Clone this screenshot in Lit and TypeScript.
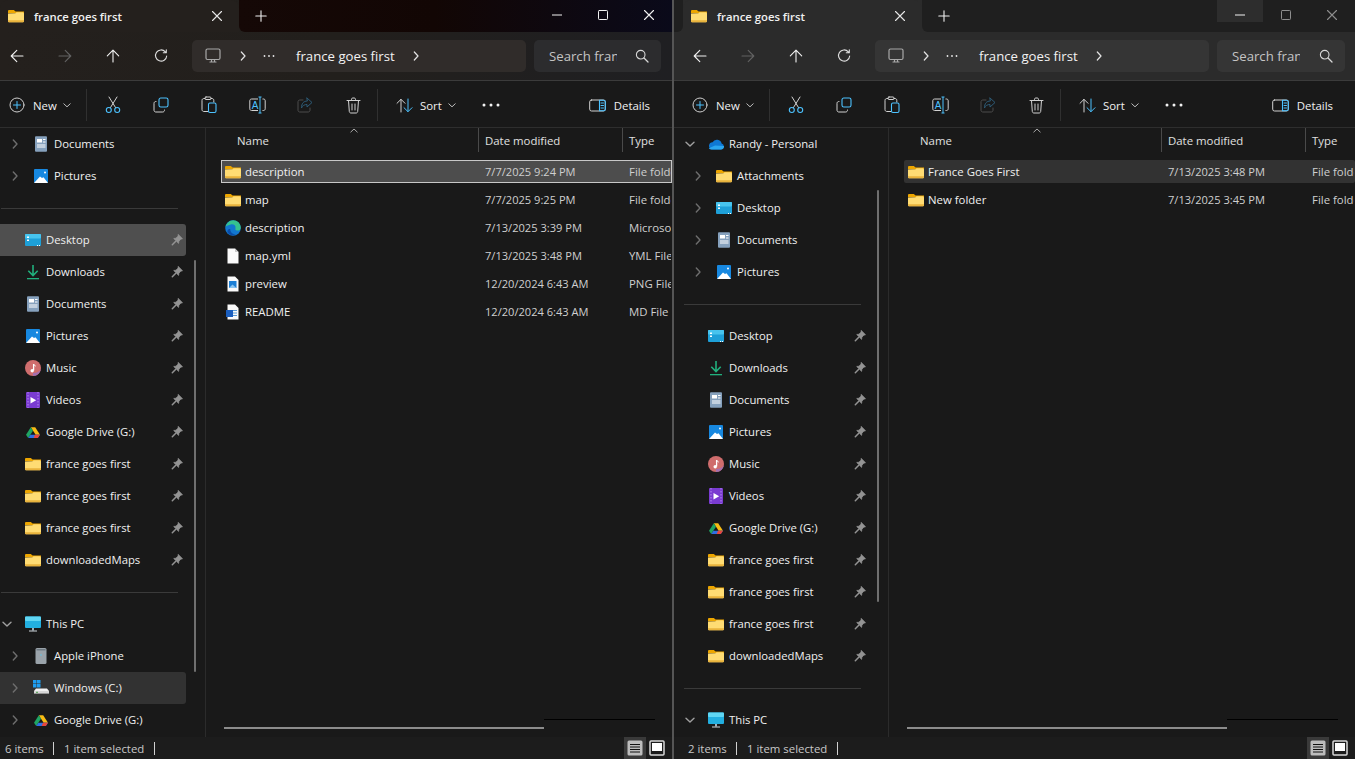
import { LitElement, html, css, svg, nothing } from "lit";

const folder = svg`<path d="M0 3.200C0 2.500.5 2 1.200 2h4.600l1.800 1.600H16v1.600H0z" fill="#eda600"/><path d="M0 5.400 7.400 5.200l1.200-1h6c.8 0 1.400.6 1.400 1.400v7.300c0 .8-.6 1.400-1.400 1.400H1.400C.6 14.300 0 13.700 0 12.900z" fill="#ffdc73"/><path d="M0 12.800c0 .8.6 1.500 1.400 1.500h13.200c.8 0 1.400-.7 1.400-1.500v-.5H0z" fill="#e9b33c"/>`;

const ICONS: Record<string, unknown> = {
  folder,
  desktop: svg`<rect x="0" y="2" width="16" height="12" rx="1" fill="#1ea0d8"/><rect x="0" y="2" width="16" height="4.500" rx="1" fill="#47c4ee"/><rect x="2" y="4.500" width="2" height="1.500" fill="#fff"/><rect x="2" y="7.500" width="2" height="1.500" fill="#fff"/><rect x="12" y="13" width="1" height="1" fill="#fff"/><rect x="14" y="13" width="1" height="1" fill="#fff"/>`,
  downloads: svg`<path d="M8 1v10M3.300 6.800 8 11.500l4.700-4.700" fill="none" stroke="#21b07d" stroke-width="1.600"/><rect x="2" y="14" width="12" height="1.300" fill="#21b07d"/>`,
  documents: svg`<rect x="2" y="0.300" width="12" height="15.500" rx="1" fill="#86a1bd"/><rect x="4" y="3" width="5" height="3.500" fill="#fff"/><rect x="10" y="3" width="2.500" height="1" fill="#fff"/><rect x="10" y="5.500" width="2.500" height="1" fill="#fff"/><rect x="4" y="8.500" width="8.500" height="1" fill="#fff"/><rect x="4" y="10.500" width="8.500" height="1" fill="#fff"/>`,
  pictures: svg`<rect x="1" y="1" width="14" height="14" rx="1" fill="#1788e0"/><path d="M1 15 7 8.500l2 1.600 1.500-.8L15 15z" fill="#fff"/><circle cx="12" cy="4.500" r="1" fill="#fff"/>`,
  music: svg`<circle cx="8" cy="8" r="8" fill="#cf6d6d"/><path d="M8 13a7.500 5 0 0 0 8-4.500c-.5 4-3.500 7.500-8 7.500z" fill="#a36fb0"/><path d="M8.600 4v6.500" stroke="#fff" stroke-width="1.300"/><circle cx="7.200" cy="10.700" r="1.700" fill="#fff"/><path d="M8.600 4c.2 1.300 1.500 1.500 2.200 2.200" stroke="#fff" fill="none"/>`,
  videos: svg`<rect x="1" y="0" width="14" height="16" rx="1" fill="#7a3bd1"/><path d="M3 0v16M13 0v16" stroke="#b68bf0" stroke-dasharray="1.500 1.500"/><path d="M5.500 5v6.500l5.700-3.200z" fill="#fff"/>`,
  drive: svg`<g transform="translate(1 2) scale(.875 .8)"><path d="M5.500 1.500h5L16 11h-5z" fill="#f8bc14"/><path d="M5.500 1.500 0 11l2.500 4L8 6z" fill="#1fa463"/><path d="M2.500 15h11l2.500-4H5z" fill="#2f6fe4"/><path d="M10.300 11 16 11l-2.500 4H8.700z" fill="#e8453c"/></g>`,
  pc: svg`<rect x="0" y="0.500" width="16" height="11.500" rx="1" fill="#22afe0"/><rect x="0" y="0.500" width="16" height="4.500" rx="1" fill="#5fd6f3"/><rect x="7" y="12" width="2" height="2.500" fill="#9fb0bb"/><rect x="4" y="14.500" width="8" height="1" fill="#cdd6dc"/>`,
  iphone: svg`<rect x="2.500" y="0" width="11" height="16" rx="1.500" fill="#9aa3aa"/><rect x="3.500" y="1" width="9" height="1.500" fill="#6e7a82"/><circle cx="8" cy="7" r=".8" fill="#5fc7e8"/>`,
  windows: svg`<rect x="0" y="0" width="3.500" height="3.500" fill="#1e9df0"/><rect x="4" y="0" width="3.500" height="3.500" fill="#1e9df0"/><rect x="0" y="4" width="3.500" height="3.500" fill="#1e9df0"/><rect x="4" y="4" width="3.500" height="3.500" fill="#1e9df0"/><path d="M1 11h15v2.600H1z" fill="#d7d7d7"/><path d="M3 8.500h11l2 2.500H1z" fill="#f2f2f2"/><rect x="3" y="11.800" width="2" height="1" fill="#4aa04a"/>`,
  cloud: svg`<path d="M3.500 13.500h9.500a3 3 0 0 0 .6-5.900 4.800 4.800 0 0 0-9-1.300A3.700 3.700 0 0 0 3.500 13.500z" fill="#0f78d4"/><path d="M3.500 13.500H13a3 3 0 0 0 3-3.500L7 9.500.8 12.200c.7.800 1.700 1.300 2.700 1.300z" fill="#2aa6f0"/>`,
  edge: svg`<circle cx="8" cy="8" r="7.800" fill="#1277cf"/><path d="M.5 7C1.500 3 4.600.2 8.200.2c3.900 0 7.600 3 7.600 7.500 0 2-1.500 2.900-3 2.900-1.700 0-3-.8-2.300-2.400C11 5.700 8.500 3.800 5.800 4.500 3.400 5 1.500 5.500.5 7z" fill="#35c28e"/><path d="M5.200 9c0 3 2.300 5.500 5.800 5.500-1.500 1.200-6 1.300-8-1.500C1.500 11 3 8.500 5.200 9z" fill="#0a4da8"/>`,
  file: svg`<path d="M2.500 0.500h7.500l3.500 3.500v11.500h-11z" fill="#fafafa"/><path d="M10 .5V4h3.500z" fill="#c9c9c9"/>`,
  image: svg`<path d="M2.500 0.500h7.500l3.500 3.500v11.500h-11z" fill="#fafafa"/><rect x="4" y="5" width="7.500" height="7" fill="#1c7fd6"/><path d="M4 12l3.500-3.500 4 3.500z" fill="#8cc6f2"/>`,
  word: svg`<path d="M2.500 0.500h7.500l3.500 3.500v11.500h-11z" fill="#fafafa"/><rect x="1" y="6" width="7" height="7" fill="#1b5ebe"/><rect x="8" y="6" width="4" height="1" fill="#5b9bd8"/><rect x="8" y="8.500" width="4" height="1" fill="#5b9bd8"/><rect x="8" y="11" width="4" height="1" fill="#5b9bd8"/>`,
};

const ic = (name: string) => html`<svg class="ic" viewBox="0 0 16 16" width="16" height="16">${ICONS[name]}</svg>`;

const glyph = (w: number, h: number, body: unknown, cls = "") =>
  html`<svg class=${cls} viewBox="0 0 ${w} ${h}" width=${w} height=${h} fill="none" stroke-linecap="round" stroke-linejoin="round">${body}</svg>`;

const GRAY = "#d2d2d2";
const BLUE = "#4cc2ff";

const chevronR = (c = "#e4e4e4", sw = 1.2) => glyph(6, 10, svg`<path d="M1.300 1 5 5 1.300 9" stroke=${c} stroke-width=${sw}/>`);
const chevronD = (c = "#c8c8c8") => glyph(10, 6, svg`<path d="M1 1.200 5 5 9 1.200" stroke=${c} stroke-width="1.400"/>`);
const tinyChevron = glyph(8, 5, svg`<path d="M.8.800 4 3.800 7.200.800" stroke="#bdbdbd" stroke-width="1"/>`);
const pin = glyph(12, 12, svg`<path d="M7.400.6 11.500 4.700l-1.700.5L7.900 7.200l-.3 2.200L2.700 4.500l2.200-.3L6.900 2.300z" fill="#939393" stroke="#939393" stroke-width=".7"/><path d="M4.500 7.500 1.300 10.700" stroke="#939393" stroke-width="1.500"/>`);

const NAV = {
  back: glyph(14, 14, svg`<path d="M13 7H1.300M6.800 1.300 1.200 7l5.600 5.700" stroke="#f2f2f2" stroke-width="1.100"/>`),
  fwd: glyph(14, 14, svg`<path d="M1 7h11.700M7.200 1.300 12.800 7l-5.600 5.700" stroke="#626262" stroke-width="1.100"/>`),
  up: glyph(14, 14, svg`<path d="M7 13V1.300M1.300 6.800 7 1.200l5.700 5.600" stroke="#f2f2f2" stroke-width="1.100"/>`),
  refresh: glyph(14, 14, svg`<path d="M11.300 2.800A5.600 5.600 0 1 0 12.700 7M12.300.8v3h-3" stroke="#dedede" stroke-width="1.100"/>`),
  monitor: glyph(16, 16, svg`<rect x="1" y="1" width="14" height="10.500" rx="1.500" stroke="#a8a8a8" stroke-width="1.200"/><path d="M5 14h6M6.500 12v2M9.500 12v2" stroke="#a8a8a8" stroke-width="1.200"/>`),
  dots: glyph(12, 4, svg`<circle cx="1.500" cy="2" r=".9" fill="#e8e8e8"/><circle cx="6" cy="2" r=".9" fill="#e8e8e8"/><circle cx="10.500" cy="2" r=".9" fill="#e8e8e8"/>`),
  search: glyph(14, 14, svg`<circle cx="5.700" cy="5.700" r="4.300" stroke="#d8d8d8" stroke-width="1.100"/><path d="M9 9l4 4" stroke="#d8d8d8" stroke-width="1.300"/>`),
  close: glyph(12, 12, svg`<path d="M1.500 1.500l9 9M10.500 1.500l-9 9" stroke="currentColor" stroke-width="1.100"/>`),
  plus: glyph(12, 12, svg`<path d="M6 .8v10.400M.8 6h10.400" stroke="#f0f0f0" stroke-width="1.100"/>`),
  min: glyph(12, 12, svg`<path d="M1 6h10" stroke="currentColor" stroke-width="1" stroke-linecap="butt"/>`),
  max: glyph(12, 12, svg`<rect x="1.500" y="1.500" width="9" height="9" rx=".8" stroke="currentColor" stroke-width="1"/>`),
};

const CMD = {
  plus: glyph(16, 16, svg`<circle cx="8" cy="8" r="7" stroke="#cfcfcf" stroke-width="1"/><path d="M8 4.500v7M4.500 8h7" stroke=${BLUE} stroke-width="1"/>`),
  cut: glyph(16, 18, svg`<path d="M4 1l6.500 10.500M12 1 5.500 11.500" stroke=${GRAY} stroke-width="1"/><circle cx="3.800" cy="14" r="2.500" stroke=${BLUE} stroke-width="1.100"/><circle cx="12.200" cy="14" r="2.500" stroke=${BLUE} stroke-width="1.100"/>`),
  copy: glyph(16, 16, svg`<path d="M3 4.500h-.2C1.800 4.500 1 5.300 1 6.300v6.900c0 1 .8 1.800 1.800 1.800h6.900c1 0 1.800-.8 1.800-1.800V13" stroke=${GRAY} stroke-width="1"/><rect x="6" y="1" width="9" height="9" rx="1.800" stroke=${BLUE} stroke-width="1.100"/>`),
  paste: glyph(16, 18, svg`<path d="M7 15.500H2.800c-1 0-1.800-.8-1.800-1.800V4.300c0-1 .8-1.800 1.800-1.800H4M10 2.500h1c1 0 1.800.8 1.800 1.800V6" stroke=${GRAY} stroke-width="1"/><rect x="4" y="1" width="6" height="2.500" rx="1" stroke=${GRAY} stroke-width="1"/><rect x="7.500" y="7" width="7.500" height="9.500" rx="1.400" stroke=${BLUE} stroke-width="1.100"/>`),
  rename: html`<svg class="txt-ic" viewBox="0 0 17 18" width="17" height="18" fill="none"><path d="M9 3H2.500C1.500 3 .8 3.700.8 4.700v8.100c0 1 .7 1.700 1.700 1.700H9M13.500 3h1c1 0 1.700.7 1.700 1.700v8.100c0 1-.7 1.700-1.700 1.700h-1" stroke=${GRAY} stroke-width="1"/><path d="M9.500 1h3M9.500 17h3M11 1v16" stroke=${BLUE} stroke-width="1"/><text x="2.700" y="12.700" font-size="10" fill=${BLUE} font-family="Liberation Sans, sans-serif">A</text></svg>`,
  share: glyph(16, 16, svg`<path d="M6 3H2.800C1.800 3 1 3.800 1 4.800v8.400c0 1 .8 1.800 1.800 1.800h8.400c1 0 1.800-.8 1.800-1.800V11" stroke="#4d4d4d" stroke-width="1"/><path d="M10 1l5 4.500-5 4.500V7.500C7.500 7.500 5.500 8.500 4.500 11c0-4.500 2-7 5.500-7z" stroke="#2d5a75" stroke-width="1"/>`),
  del: glyph(15, 17, svg`<path d="M1 3.500h13M5.500 3.500V2.300c0-.7.5-1.300 1.200-1.300h1.600c.7 0 1.200.6 1.200 1.300v1.200M2.500 3.500l.8 11c.1.900.8 1.500 1.600 1.500h5.200c.8 0 1.500-.6 1.600-1.500l.8-11M6 7v6M9 7v6" stroke=${GRAY} stroke-width="1"/>`),
  sort: glyph(17, 15, svg`<path d="M5 14V1.500M1 5.300 5 1.300l4 4" stroke=${GRAY} stroke-width="1"/><path d="M12 1v12.500M8 9.700l4 4 4-4" stroke=${BLUE} stroke-width="1"/>`),
  more: glyph(18, 4, svg`<circle cx="2" cy="2" r="1.500" fill="#f2f2f2"/><circle cx="9" cy="2" r="1.500" fill="#f2f2f2"/><circle cx="16" cy="2" r="1.500" fill="#f2f2f2"/>`),
  details: glyph(17, 13, svg`<rect x=".7" y="1" width="15.600" height="11" rx="1.800" stroke=${GRAY} stroke-width="1"/><path d="M10.500 1.200h4c1 0 1.800.8 1.800 1.800v7c0 1-.8 1.800-1.800 1.800h-4z" stroke=${BLUE} stroke-width="1.100"/><path d="M12 4h2.500M12 6.500h2.500M12 9h2.500" stroke=${BLUE} stroke-width="1"/>`),
};

type Side = { sep?: boolean; level?: number; chev?: "r" | "d"; icon?: string; label?: string; pin?: boolean; state?: string };

const quick = (state?: string): Side[] => [
  { level: 0, icon: "desktop", label: "Desktop", pin: true, state },
  { level: 0, icon: "downloads", label: "Downloads", pin: true },
  { level: 0, icon: "documents", label: "Documents", pin: true },
  { level: 0, icon: "pictures", label: "Pictures", pin: true },
  { level: 0, icon: "music", label: "Music", pin: true },
  { level: 0, icon: "videos", label: "Videos", pin: true },
  { level: 0, icon: "drive", label: "Google Drive (G:)", pin: true },
  { level: 0, icon: "folder", label: "france goes first", pin: true },
  { level: 0, icon: "folder", label: "france goes first", pin: true },
  { level: 0, icon: "folder", label: "france goes first", pin: true },
  { level: 0, icon: "folder", label: "downloadedMaps", pin: true },
];

const LEFT_SIDE: Side[] = [
  { level: 1, chev: "r", icon: "documents", label: "Documents" },
  { level: 1, chev: "r", icon: "pictures", label: "Pictures" },
  { sep: true },
  ...quick("selected"),
  { sep: true },
  { level: 0, chev: "d", icon: "pc", label: "This PC" },
  { level: 1, chev: "r", icon: "iphone", label: "Apple iPhone" },
  { level: 1, chev: "r", icon: "windows", label: "Windows (C:)", state: "current" },
  { level: 1, chev: "r", icon: "drive", label: "Google Drive (G:)" },
];

const RIGHT_SIDE: Side[] = [
  { level: 0, chev: "d", icon: "cloud", label: "Randy - Personal" },
  { level: 1, chev: "r", icon: "folder", label: "Attachments" },
  { level: 1, chev: "r", icon: "desktop", label: "Desktop" },
  { level: 1, chev: "r", icon: "documents", label: "Documents" },
  { level: 1, chev: "r", icon: "pictures", label: "Pictures" },
  { sep: true },
  ...quick(),
  { sep: true },
  { level: 0, chev: "d", icon: "pc", label: "This PC" },
];

type FileRow = { icon: string; name: string; date: string; type: string; state?: string };

const LEFT_FILES: FileRow[] = [
  { icon: "folder", name: "description", date: "7/7/2025 9:24 PM", type: "File folder", state: "focused" },
  { icon: "folder", name: "map", date: "7/7/2025 9:25 PM", type: "File folder" },
  { icon: "edge", name: "description", date: "7/13/2025 3:39 PM", type: "Microsoft Edge" },
  { icon: "file", name: "map.yml", date: "7/13/2025 3:48 PM", type: "YML File" },
  { icon: "image", name: "preview", date: "12/20/2024 6:43 AM", type: "PNG File" },
  { icon: "word", name: "README", date: "12/20/2024 6:43 AM", type: "MD File" },
];

const RIGHT_FILES: FileRow[] = [
  { icon: "folder", name: "France Goes First", date: "7/13/2025 3:48 PM", type: "File folder", state: "soft" },
  { icon: "folder", name: "New folder", date: "7/13/2025 3:45 PM", type: "File folder" },
];

class ExplorerPane extends LitElement {
  static properties = {
    side: { attribute: false },
    files: { attribute: false },
    variant: { reflect: true },
    count: {},
    thumbTop: { type: Number },
  };
  declare side: Side[];
  declare files: FileRow[];
  declare variant: string;
  declare count: string;
  declare thumbTop: number;

  static styles = css`
    :host {
      display: flex;
      flex-direction: column;
      height: 759px;
      overflow: hidden;
      position: relative;
      background: #191919;
      color: #f0f0f0;
      font-family: "Open Sans", "Noto Sans", sans-serif;
      font-size: 11.400px;
      --inset: 0px;
      --strip: linear-gradient(90deg, #150806 0%, #120604 45%, #0a0a1a 100%);
      --chrome: linear-gradient(90deg, #24201d 0%, #221f1c 50%, #1f1f22 100%);
      --tab: #24201d;
      --field: #302c2a;
      --field2: #2c2c2e;
      --cap: #f2f2f2;
      --cap2: #f2f2f2;
      --hover: transparent;
    }
    :host([variant="blurred"]) {
      --inset: 9px;
      --strip: #1f1f1f;
      --chrome: #2b2b2b;
      --tab: #2b2b2b;
      --field: #353535;
      --field2: #353535;
      --cap2: #8e8e8e;
      --hover: #2d2d2d;
    }
    svg { display: block; flex: none; }
    .strip { display: flex; height: 32px; background: var(--chrome); flex: none; }
    .strip-gap { width: var(--inset); background: var(--strip); border-bottom-right-radius: 6px; flex: none; }
    .tab { width: 239px; display: flex; align-items: center; padding: 0 16px 0 8px; box-sizing: border-box; background: var(--tab); border-radius: 8px 8px 0 0; flex: none; }
    .tab-title { margin-left: 10px; font-weight: 600; flex: 1; white-space: nowrap; font-size: 11.300px; }
    .tab-x { color: #e8e8e8; }
    .rest { flex: 1; display: flex; align-items: flex-start; background: var(--strip); border-bottom-left-radius: 6px; }
    .plus { padding: 10px 0 0 16px; }
    .caps { margin-left: auto; display: flex; }
    .cap { width: 46px; height: 15px; padding-top: 7px; display: flex; align-items: center; justify-content: center; color: var(--cap2); }
    .cap.min { background: var(--hover); color: var(--cap); }
    .nav { height: 48px; display: flex; align-items: center; background: var(--chrome); padding-left: calc(10px + var(--inset)); padding-right: 11px; border-bottom: 1px solid #3b3b3b; flex: none; }
    :host([variant="blurred"]) .nav { padding-right: 10px; }
    .nav-btns { display: flex; gap: 34px; }
    .crumbs { margin-left: 24px; width: 334px; height: 32px; border-radius: 5px; background: var(--field); display: flex; align-items: center; padding-left: 13px; box-sizing: border-box; font-size: 13.200px; color: #f2f2f2; flex: none; }
    .crumb-chev { margin-left: 19px; }
    .crumb-dots { margin-left: 17px; }
    .crumb-name { margin-left: 21px; white-space: nowrap; }
    .crumb-end { margin-left: 18px; }
    .searchbox { margin-left: 8px; flex: 1; height: 32px; border-radius: 5px; background: var(--field2); display: flex; align-items: center; padding: 0 12px 0 15px; box-sizing: border-box; font-size: 13.200px; color: #c4c4c4; }
    .search-text { width: 68px; overflow: hidden; white-space: nowrap; flex: none; }
    .searchbox svg { margin-left: auto; }
    .cmd { height: 47px; display: flex; align-items: center; background: #191919; padding-left: calc(9px + var(--inset)); padding-top: 2px; box-sizing: border-box; border-bottom: 1px solid #2e2e2e; flex: none; }
    .new { display: flex; align-items: center; width: 77px; flex: none; }
    .new span { margin-left: 8px; margin-right: 6px; }
    .vsep { width: 1px; height: 32px; background: #303030; flex: none; }
    .tools { display: flex; flex: none; margin-left: 2px; }
    .tool { width: 48px; height: 32px; display: flex; align-items: center; justify-content: center; flex: none; }
    .sort { display: flex; align-items: center; margin-left: 18px; flex: none; }
    .sort span { margin-left: 7px; margin-right: 6px; }
    .more { margin-left: 26px; flex: none; }
    .details { display: flex; align-items: center; margin-left: auto; padding-right: 22px; flex: none; }
    .details span { margin-left: 8px; }
    .body { flex: 1; display: flex; min-height: 0; position: relative; padding-left: var(--inset); }
    .tree { width: 205px; flex: none; overflow: hidden; border-right: 1px solid #2b2b2b; }
    .row { height: 32px; width: 186px; display: flex; align-items: center; box-sizing: border-box; border-radius: 0 3px 3px 0; white-space: nowrap; font-size: 11.300px; }
    .row.selected { background: #4f4f4f; }
    .row.current { background: #323232; }
    .chev { width: 14px; display: flex; justify-content: center; flex: none; }
    .row .ic { margin-left: 11px; }
    .row .label { margin-left: 5px; flex: 1; padding-bottom: 2px; }
    .row.l1 { padding-left: 8px; }
    .row .pin { margin-right: 3px; }
    .sep { height: 32px; display: flex; align-items: center; }
    .sep i { display: block; width: 177px; margin-left: 1px; height: 1px; background: #3a3a3a; }
    .thumb { position: absolute; left: calc(194px + var(--inset)); width: 2px; background: #6f6f6f; border-radius: 1px; }
    .list { flex: 1; min-width: 0; overflow: hidden; position: relative; }
    .head { height: 24px; display: flex; font-size: 11.400px; color: #e0e0e0; position: relative; }
    .h-name { width: 273px; padding-left: 31px; box-sizing: border-box; border-right: 1px solid #4a4a4a; display: flex; align-items: center; flex: none; }
    .h-date { width: 144px; padding-left: 6px; box-sizing: border-box; border-right: 1px solid #4a4a4a; display: flex; align-items: center; flex: none; }
    .h-type { padding-left: 6px; display: flex; align-items: center; flex: none; }
    .caret { position: absolute; left: 144px; top: 0; }
    .rows { padding: 8px 0 0 15px; display: flex; flex-direction: column; gap: 5px; }
    .frow { height: 23px; display: flex; align-items: center; box-sizing: border-box; white-space: nowrap; font-size: 11.400px; border: 1px solid transparent; overflow: hidden; }
    .frow.focused { background: #4d4d4d; border-color: #c8c8c8; }
    .frow.soft { background: #323232; border-radius: 2px; }
    .f-name { width: 263px; display: flex; align-items: center; padding-left: 3px; box-sizing: border-box; flex: none; }
    .f-name span { margin-left: 4px; }
    .f-date { width: 144px; color: #cfcfcf; flex: none; font-size: 11.100px; }
    .f-type { color: #cfcfcf; flex: none; }
    .hbar { position: absolute; left: 18px; bottom: 8px; width: 320px; height: 2px; background: #8c8c8c; }
    .hline { position: absolute; left: 338px; bottom: 17px; width: 111px; height: 1px; background: #000; }
    .status { height: 22px; background: #1c1c1c; display: flex; align-items: center; padding-left: calc(5px + var(--inset)); color: #c8c8c8; position: relative; flex: none; font-size: 11.400px; white-space: nowrap; }
    .bar { width: 1px; height: 13px; background: #d0d0d0; flex: none; }
    .status .a { width: 48px; flex: none; }
    .status .b { margin: 0 10px; }
    .views { margin-left: auto; display: flex; height: 22px; align-items: stretch; padding-right: 4px; }
    .view { width: 22px; display: flex; align-items: center; justify-content: center; }
    .view.on { background: #3a3a3a; }
  `;

  private sideRow(r: Side) {
    if (r.sep) return html`<div class="sep"><i></i></div>`;
    const chev = r.chev === "r" ? chevronR("#6e6e6e", 1.4) : r.chev === "d" ? chevronD("#a0a0a0") : nothing;
    return html`<div class="row l${r.level} ${r.state ?? ""}">
      <span class="chev">${chev}</span>${ic(r.icon!)}<span class="label">${r.label}</span>
      ${r.pin ? html`<span class="pin">${pin}</span>` : nothing}
    </div>`;
  }

  render() {
    return html`
      <div class="strip">
        <div class="strip-gap"></div>
        <div class="tab">${ic("folder")}<span class="tab-title">france goes first</span><span class="tab-x">${NAV.close}</span></div>
        <div class="rest">
          <span class="plus">${NAV.plus}</span>
          <div class="caps"><span class="cap min">${NAV.min}</span><span class="cap">${NAV.max}</span><span class="cap">${NAV.close}</span></div>
        </div>
      </div>
      <div class="nav">
        <div class="nav-btns">${NAV.back}${NAV.fwd}${NAV.up}${NAV.refresh}</div>
        <div class="crumbs">${NAV.monitor}<span class="crumb-chev">${chevronR()}</span><span class="crumb-dots">${NAV.dots}</span><span class="crumb-name">france goes first</span><span class="crumb-end">${chevronR()}</span></div>
        <div class="searchbox"><span class="search-text">Search france goes first</span>${NAV.search}</div>
      </div>
      <div class="cmd">
        <div class="new">${CMD.plus}<span>New</span>${tinyChevron}</div>
        <div class="vsep"></div>
        <div class="tools">
          <span class="tool">${CMD.cut}</span><span class="tool">${CMD.copy}</span><span class="tool">${CMD.paste}</span>
          <span class="tool">${CMD.rename}</span><span class="tool">${CMD.share}</span><span class="tool">${CMD.del}</span>
        </div>
        <div class="vsep"></div>
        <div class="sort">${CMD.sort}<span>Sort</span>${tinyChevron}</div>
        <div class="more">${CMD.more}</div>
        <div class="details">${CMD.details}<span>Details</span></div>
      </div>
      <div class="body">
        <div class="tree">${this.side.map((r) => this.sideRow(r))}</div>
        <div class="thumb" style="top:${this.thumbTop}px;height:412px"></div>
        <div class="list">
          <div class="head">
            <div class="h-name">Name</div><div class="h-date">Date modified</div><div class="h-type">Type</div>
            <span class="caret">${glyph(8, 5, svg`<path d="M.8 4 4 1l3.200 3" stroke="#a8a8a8" stroke-width="1"/>`)}</span>
          </div>
          <div class="rows">
            ${this.files.map((f) => html`<div class="frow ${f.state ?? ""}">
              <div class="f-name">${ic(f.icon)}<span>${f.name}</span></div>
              <div class="f-date">${f.date}</div><div class="f-type">${f.type}</div>
            </div>`)}
          </div>
          <div class="hline"></div><div class="hbar"></div>
        </div>
      </div>
      <div class="status">
        <span class="a">${this.count}</span><span class="bar"></span><span class="b">1 item selected</span><span class="bar"></span>
        <div class="views">
          <span class="view on">${glyph(16, 16, svg`<rect x=".5" y=".5" width="15" height="15" rx="1.500" fill="#bdbdbd"/><path d="M3 4.500h10M3 7h10M3 9.500h10M3 12h10" stroke="#111" stroke-width="1" stroke-linecap="butt"/>`)}</span>
          <span class="view">${glyph(16, 16, svg`<rect x="1" y="1" width="14" height="14" rx="1" stroke="#d8d8d8" stroke-width="1.500"/><rect x="3" y="3" width="10" height="8" fill="#fff"/>`)}</span>
        </div>
      </div>
    `;
  }
}
customElements.define("explorer-pane", ExplorerPane);

class AppRoot extends LitElement {
  static styles = css`
    :host { display: block; width: 1355px; height: 759px; overflow: hidden; background: #191919; }
    .desk { display: flex; height: 759px; }
    .left { width: 672px; flex: none; }
    .divider { width: 2px; background: #555; flex: none; }
    .right { flex: 1; min-width: 0; }
  `;
  render() {
    return html`<div class="desk">
      <explorer-pane class="left" .side=${LEFT_SIDE} .files=${LEFT_FILES} count="6 items" thumbTop="132"></explorer-pane>
      <div class="divider"></div>
      <explorer-pane class="right" variant="blurred" .side=${RIGHT_SIDE} .files=${RIGHT_FILES} count="2 items" thumbTop="62"></explorer-pane>
    </div>`;
  }
}
customElements.define("app-root", AppRoot);
